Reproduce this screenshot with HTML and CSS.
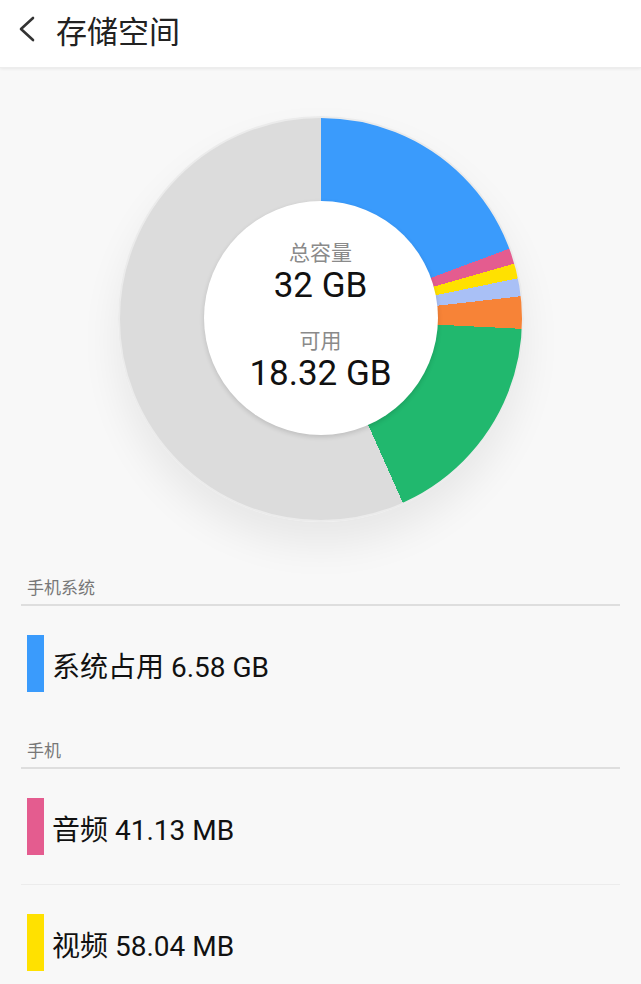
FILE: index.html
```html
<!DOCTYPE html>
<html lang="zh">
<head>
    <meta charset="UTF-8">
    <meta name="viewport" content="width=device-width, initial-scale=1.0">
    <title>存储空间</title>
    <link rel="stylesheet" href="styles.css">
</head>
<body>
    <div class="header">
        <svg class="back" width="20" height="28" viewBox="0 0 20 28">
            <polyline points="15,3 3,14 15,25" fill="none" stroke="#333" stroke-width="2.6" stroke-linecap="round" stroke-linejoin="round"/>
        </svg>
        <div class="title">存储空间</div>
    </div>

    <div class="chart-wrap">
        <div class="donut">
            <div class="donut-hole">
                <div class="hole-label">总容量</div>
                <div class="hole-value">32 GB</div>
                <div class="hole-label hole-gap">可用</div>
                <div class="hole-value">18.32 GB</div>
            </div>
        </div>
    </div>

    <div class="section-label first">手机系统</div>
    <div class="row">
        <span class="swatch blue"></span>
        <span class="row-text">系统占用 6.58 GB</span>
    </div>

    <div class="section-label">手机</div>
    <div class="row divided">
        <span class="swatch pink"></span>
        <span class="row-text">音频 41.13 MB</span>
    </div>
    <div class="row">
        <span class="swatch yellow"></span>
        <span class="row-text">视频 58.04 MB</span>
    </div>
</body>
</html>
```

FILE: styles.css
```css
body {
    margin: 0;
    background: #f8f8f8;
    font-family: 'Roboto', 'Noto Sans CJK SC', sans-serif;
    color: #111;
    overflow: hidden;
}

.header {
    height: 68px;
    background: #fff;
    display: flex;
    align-items: center;
    box-shadow: 0 1px 3px rgba(0, 0, 0, 0.07);
    border-bottom: 1px solid #ededed;
    box-sizing: border-box;
}

.back {
    margin-left: 18px;
    margin-right: 18px;
    margin-top: -9px;
}

.title {
    font-size: 31px;
    color: #222;
    margin-top: -9px;
}

.chart-wrap {
    display: flex;
    justify-content: center;
    padding-top: 48px;
}

.donut {
    width: 406px;
    height: 406px;
    border-radius: 50%;
    border: 2px solid #ebebeb;
    box-sizing: border-box;
    background: conic-gradient(
        #3a9bfc 0deg 69.5deg,
        #e45c8f 69.5deg 74deg,
        #ffe100 74deg 78.3deg,
        #a9c0f6 78.3deg 83.5deg,
        #f78337 83.5deg 92.8deg,
        #21b86e 92.8deg 156deg,
        #dcdcdc 156deg 360deg
    );
    box-shadow: 0 22px 40px rgba(0, 0, 0, 0.07);
    display: flex;
    align-items: center;
    justify-content: center;
}

.donut-hole {
    width: 234px;
    height: 234px;
    border-radius: 50%;
    background: #fff;
    box-shadow: 0 2px 5px rgba(0, 0, 0, 0.14);
    display: flex;
    flex-direction: column;
    align-items: center;
    justify-content: center;
    margin-top: -2px;
}

.hole-label {
    font-size: 21px;
    line-height: 24px;
    color: #8a8a8a;
}

.hole-gap {
    margin-top: 22px;
}

.hole-value {
    font-size: 35px;
    line-height: 42px;
    color: #111;
}

.section-label {
    margin: 0 21px;
    padding: 19px 6px 5px;
    font-size: 17px;
    line-height: 22px;
    color: #777;
    border-bottom: 2px solid #dedede;
}

.section-label.first {
    margin-top: 36px;
}

.row {
    margin: 0 21px;
    padding: 29px 6px;
    display: flex;
    align-items: center;
}

.row.divided {
    border-bottom: 1px solid #ececec;
}

.swatch {
    width: 17px;
    height: 57px;
    margin-right: 8px;
}

.blue { background: #3a9bfc; }
.pink { background: #e45c8f; }
.yellow { background: #ffe100; }

.row-text {
    font-size: 28px;
    color: #111;
    margin-top: 2px;
}
```
